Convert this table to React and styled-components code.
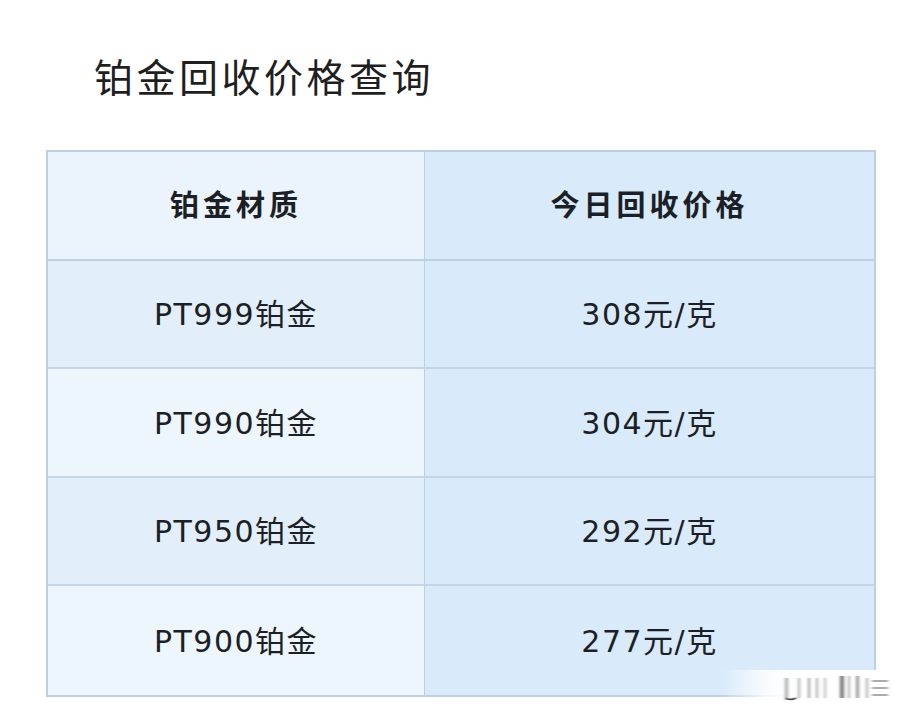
import React from "react";
import styled, { createGlobalStyle } from "styled-components";

const rows = [
  { name: "PT999铂金", price: "308元/克" },
  { name: "PT990铂金", price: "304元/克" },
  { name: "PT950铂金", price: "292元/克" },
  { name: "PT900铂金", price: "277元/克" },
];

const App = () => {
  return (
    <>
      <GlobalStyle />
      <Page>
        <Title>铂金回收价格查询</Title>
        <Table>
          <HeadCell side="left">铂金材质</HeadCell>
          <HeadCell side="right">今日回收价格</HeadCell>
          {rows.map((row, i) => (
            <React.Fragment key={row.name}>
              <Cell side="left" shade={i % 2 === 0} last={i === rows.length - 1}>
                {row.name}
              </Cell>
              <Cell side="right" last={i === rows.length - 1}>
                {row.price}
              </Cell>
            </React.Fragment>
          ))}
        </Table>
        <Watermark>
          <svg width="180" height="34" viewBox="0 0 180 34">
            <defs>
              <filter id="blur" x="-20%" y="-20%" width="140%" height="140%">
                <feGaussianBlur stdDeviation="1.4 0.6" />
              </filter>
            </defs>
            <g filter="url(#blur)" fill="#555">
              <rect x="55" y="8" width="3" height="22" opacity="0.5" />
              <path d="M56 28 Q60 31 66 28" stroke="#333" strokeWidth="1.5" fill="none" />
              <rect x="68" y="8" width="2" height="20" opacity="0.5" />
              <rect x="78" y="8" width="2" height="20" opacity="0.6" />
              <rect x="86" y="8" width="2" height="20" opacity="0.5" />
              <rect x="94" y="8" width="2" height="20" opacity="0.4" />
              <rect x="110" y="6" width="4" height="22" opacity="0.8" />
              <rect x="118" y="6" width="2" height="22" opacity="0.5" />
              <rect x="126" y="6" width="3" height="22" opacity="0.6" />
              <rect x="136" y="8" width="2" height="20" opacity="0.5" />
              <rect x="142" y="10" width="16" height="2" opacity="0.5" />
              <rect x="142" y="17" width="16" height="2" opacity="0.5" />
              <rect x="142" y="24" width="16" height="2" opacity="0.5" />
            </g>
          </svg>
        </Watermark>
      </Page>
    </>
  );
};

export default App;

const GlobalStyle = createGlobalStyle`
  body {
    margin: 0;
    background: #ffffff;
    font-family: "DejaVu Sans", "Noto Sans CJK SC", sans-serif;
  }
`;

const Page = styled.div`
  position: relative;
  width: 922px;
  height: 718px;
  padding: 49px 0 0 46px;
  box-sizing: border-box;
  overflow: hidden;
`;

const Title = styled.h1`
  margin: 0 0 49px 48px;
  font-family: "Noto Sans CJK SC", sans-serif;
  font-size: 39px;
  font-weight: 400;
  line-height: 52px;
  color: #1f1f1f;
  letter-spacing: 3.5px;
`;

const Table = styled.div`
  display: grid;
  grid-template-columns: 377px 1fr;
  grid-auto-rows: 108.5px;
  width: 830px;
  border: 2px solid #bcd0e2;
  box-sizing: border-box;
`;

const HeadCell = styled.div`
  display: flex;
  align-items: center;
  justify-content: center;
  padding-bottom: 4px;
  font-family: "Noto Sans CJK SC", sans-serif;
  font-size: 29px;
  font-weight: 700;
  color: #1c1f24;
  letter-spacing: 4px;
  background: ${(p) => (p.side === "left" ? "#ebf4fd" : "#d9eafb")};
  border-bottom: 2px solid #bcd0e2;
  border-right: ${(p) => (p.side === "left" ? "1px solid #bcd0e2" : "none")};
`;

const Cell = styled.div`
  display: flex;
  align-items: center;
  justify-content: center;
  padding-bottom: 3px;
  font-size: 30px;
  font-weight: 400;
  color: #1c1f24;
  letter-spacing: 1.5px;
  background: ${(p) =>
    p.side === "right" ? "#d9eafb" : p.shade ? "#e2eef9" : "#edf5fd"};
  border-bottom: ${(p) => (p.last ? "none" : "2px solid #c3d6e7")};
  border-right: ${(p) => (p.side === "left" ? "1px solid #bcd0e2" : "none")};
`;

const Watermark = styled.div`
  position: absolute;
  right: 12px;
  bottom: 14px;
  width: 190px;
  height: 34px;
  display: flex;
  justify-content: flex-end;
  background: linear-gradient(
    to right,
    rgba(255, 255, 255, 0) 0%,
    rgba(255, 255, 255, 0.85) 25%,
    #ffffff 40%
  );
`;
